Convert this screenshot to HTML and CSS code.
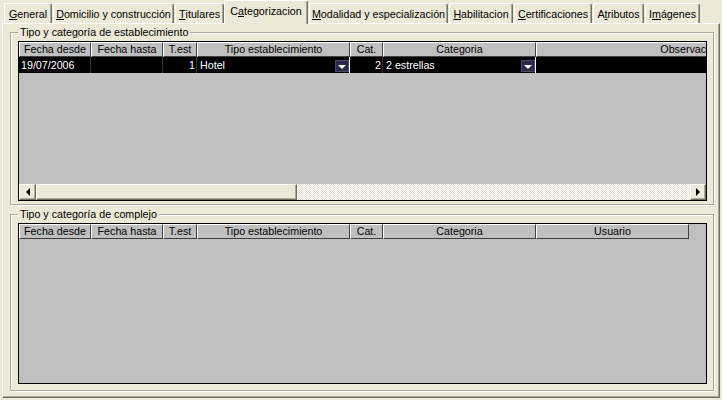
FILE: index.html
```html
<!DOCTYPE html>
<html lang="es">
<head>
<meta charset="utf-8">
<title>Categorizacion</title>
<link rel="stylesheet" href="styles.css">
</head>
<body>
<div class="tabs">
  <div class="tab w1"><u>G</u>eneral</div>
  <div class="tab w2"><u>D</u>omicilio y construcción</div>
  <div class="tab w3"><u>T</u>itulares</div>
  <div class="tab active w4">C<u>a</u>tegorizacion</div>
  <div class="tab w5"><u>M</u>odalidad y especialización</div>
  <div class="tab w6"><u>H</u>abilitacion</div>
  <div class="tab w7"><u>C</u>ertificaciones</div>
  <div class="tab w8">A<u>t</u>ributos</div>
  <div class="tab w9">I<u>m</u>ágenes</div>
</div>
<div class="panel">
  <fieldset class="group g1">
    <legend>Tipo y categoría de establecimiento</legend>
    <div class="grid grid1">
      <div class="row head">
        <div class="c c1">Fecha desde</div>
        <div class="c c2">Fecha hasta</div>
        <div class="c c3">T.est</div>
        <div class="c c4">Tipo establecimiento</div>
        <div class="c c5">Cat.</div>
        <div class="c c6">Categoria</div>
        <div class="c c7">Observaciones</div>
      </div>
      <div class="row data">
        <div class="c c1">19/07/2006</div>
        <div class="c c2"></div>
        <div class="c c3 num">1</div>
        <div class="c c4 combo"><span>Hotel</span><i class="dd"></i></div>
        <div class="c c5 num">2</div>
        <div class="c c6 combo"><span>2 estrellas</span><i class="dd"></i></div>
        <div class="c c7"></div>
      </div>
      <div class="body"></div>
      <div class="hscroll">
        <div class="sbtn left"></div>
        <div class="thumb"></div>
        <div class="track"></div>
        <div class="sbtn right"></div>
      </div>
    </div>
  </fieldset>
  <fieldset class="group g2">
    <legend>Tipo y categoría de complejo</legend>
    <div class="grid grid2">
      <div class="row head">
        <div class="c c1">Fecha desde</div>
        <div class="c c2">Fecha hasta</div>
        <div class="c c3">T.est</div>
        <div class="c c4">Tipo establecimiento</div>
        <div class="c c5">Cat.</div>
        <div class="c c6">Categoria</div>
        <div class="c c6">Usuario</div>
      </div>
      <div class="body"></div>
    </div>
  </fieldset>
</div>
</body>
</html>
```
FILE: styles.css
```css
* { box-sizing: border-box; }

body {
  margin: 0;
  width: 722px;
  height: 400px;
  overflow: hidden;
  background: #ECE9D8;
  font-family: "Liberation Sans", Arial, sans-serif;
  font-size: 10.7px;
  color: #000;
}

/* ---------- tabs ---------- */
.tabs {
  position: relative;
  z-index: 2;
  display: flex;
  align-items: flex-end;
  gap: 1px;
  height: 23px;
  padding-left: 4px;
}
.tab {
  flex: none;
  height: 20px;
  background: #ECE9D8;
  border-top: 1px solid #fff;
  border-left: 1px solid #fff;
  border-right: 1px solid #716F64;
  box-shadow: inset -1px 0 #ACA899;
  border-radius: 2px 3px 0 0;
  display: flex;
  align-items: center;
  justify-content: center;
  white-space: nowrap;
  padding-top: 1px;
}
.tab u { text-decoration: underline; text-underline-offset: 1px; }
.tab.active {
  height: 24px;
  margin-bottom: -1px;
  margin-left: -1px;
  padding-top: 0;
  padding-bottom: 4px;
}
.w1 { width: 48px; }
.w2 { width: 121px; }
.w3 { width: 49px; }
.w4 { width: 84px; }
.w5 { width: 139px; }
.w6 { width: 64px; }
.w7 { width: 78px; }
.w8 { width: 51px; }
.w9 { width: 55px; }

/* ---------- panel ---------- */
.panel {
  margin-left: 2px;
  width: 718px;
  height: 375px;
  border-top: 1px solid #fff;
  border-left: 1px solid #fff;
  border-right: 1px solid #716F64;
  border-bottom: 1px solid #716F64;
  box-shadow: inset -1px -1px #ACA899;
  padding: 2px 5px 0 7px;
}

/* ---------- group boxes ---------- */
.group {
  margin: 0;
  min-width: 0;
  border: 1px solid #ACA899;
  box-shadow: inset 1px 1px #fff, 1px 1px #fff;
}
.group legend {
  padding: 0 2px;
  line-height: 13px;
  background: #ECE9D8;
}
.g1 { padding: 2px 6px 3px 7px; }
.g2 { padding: 2px 6px 6px 7px; margin-top: 3px; }

/* ---------- grids ---------- */
.grid {
  border: 1px solid #000;
  background: #C0C0C0;
  display: flex;
  flex-direction: column;
  overflow: hidden;
}
.grid1 { height: 160px; }
.grid2 { height: 161px; }

.row { display: flex; flex: none; }
.c { flex: none; overflow: hidden; white-space: nowrap; }
.c1 { width: 72px; }
.c2 { width: 72px; }
.c3 { width: 34px; }
.c4 { width: 153px; }
.c5 { width: 33px; }
.c6 { width: 153px; }
.c7 { width: 320px; }

.head { height: 15px; }
.head .c {
  background: #C0C0C0;
  border-top: 1px solid #fff;
  border-left: 1px solid #fff;
  border-right: 1px solid #404040;
  border-bottom: 1px solid #404040;
  text-align: center;
  line-height: 12px;
}

.data {
  height: 16px;
  background: #000;
  color: #fff;
}
.data .c {
  border-right: 1px solid #333;
  padding: 0 2px;
  line-height: 16px;
}
.data .num { text-align: right; padding-right: 1px; }
.data .combo {
  display: flex;
  align-items: center;
  padding: 0 0 0 3px;
  border-right-color: #fff;
}
.combo span { flex: 1; }
.dd {
  flex: none;
  width: 14px;
  height: 12px;
  margin-top: 2px;
  background: #2a2a48;
  border: 1px solid #4a4a68;
  display: flex;
  align-items: center;
  justify-content: center;
}
.dd::before {
  content: "";
  border-left: 4px solid transparent;
  border-right: 4px solid transparent;
  border-top: 4px solid #fff;
  margin-top: 1px;
}

.body { flex: 1; }

/* ---------- scrollbar ---------- */
.hscroll { display: flex; height: 16px; flex: none; }
.sbtn, .thumb {
  flex: none;
  background: #ECE9D8;
  border-top: 1px solid #fff;
  border-left: 1px solid #fff;
  border-right: 1px solid #716F64;
  border-bottom: 1px solid #716F64;
  box-shadow: inset -1px -1px #ACA899;
}
.sbtn {
  width: 17px;
  display: flex;
  align-items: center;
  justify-content: center;
}
.sbtn.left::before {
  content: "";
  border-top: 4px solid transparent;
  border-bottom: 4px solid transparent;
  border-right: 4px solid #000;
}
.sbtn.right { width: 16px; }
.sbtn.right::before {
  content: "";
  border-top: 4px solid transparent;
  border-bottom: 4px solid transparent;
  border-left: 4px solid #000;
}
.thumb { width: 261px; }
.track {
  flex: 1;
  background: repeating-conic-gradient(#fff 0 25%, #E4E1D0 0 50%) 0 0 / 2px 2px;
}
```
